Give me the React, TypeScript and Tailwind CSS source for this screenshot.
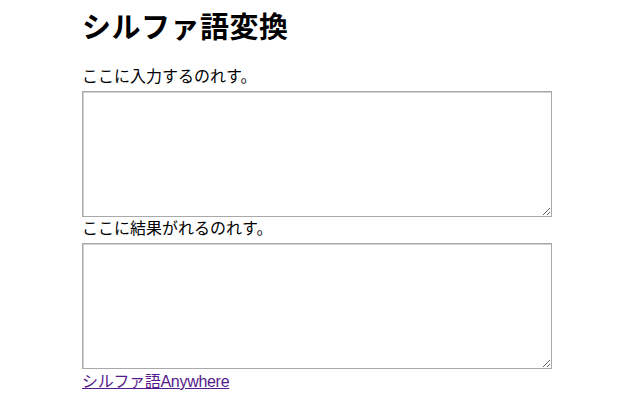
export default function App() {
  const font = { fontFamily: '"Noto Sans CJK JP", "Noto Sans", sans-serif' };
  const linkFont = { fontFamily: '"Liberation Sans", "Noto Sans CJK JP", sans-serif' };
  return (
    <div className="w-[640px] h-[400px] bg-white text-black overflow-hidden pl-[82px]" style={font}>
      <h1 className="text-[29px] leading-[36px] font-bold mt-[7px] tracking-[0.5px]">シルファ語変換</h1>
      <div className="text-[16px] leading-[20px] mt-[22px]">ここに入力するのれす。</div>
      <textarea className="block mt-[6px] w-[470px] h-[126px] border border-[#a9a9a9] shadow-[inset_1px_1px_0_#d0d0d0] bg-white outline-none" />
      <div className="text-[16px] leading-[20px] mt-0">ここに結果がれるのれす。</div>
      <textarea className="block mt-[6px] w-[470px] h-[126px] border border-[#a9a9a9] shadow-[inset_1px_1px_0_#d0d0d0] bg-white outline-none" />
      <a href="#" className="block w-fit mt-[3px] text-[16px] leading-[20px] text-[#551a8b] underline tracking-[-0.3px]" style={linkFont}>シルファ語Anywhere</a>
    </div>
  );
}
